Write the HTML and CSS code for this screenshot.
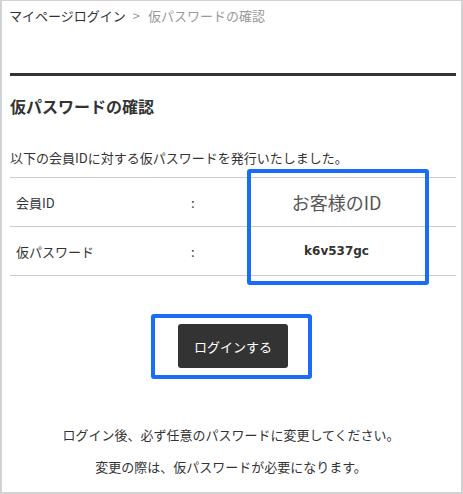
FILE: index.html
```html
<!DOCTYPE html>
<html lang="ja">
<head>
<meta charset="utf-8">
<title>仮パスワードの確認</title>
<link rel="stylesheet" href="styles.css">
</head>
<body>
<div class="page">
  <nav class="crumbs">
    <span class="crumb-link">マイページログイン</span><span class="crumb-sep">&gt;</span><span class="crumb-current">仮パスワードの確認</span>
  </nav>
  <hr class="rule">
  <h1 class="title">仮パスワードの確認</h1>
  <p class="lead">以下の会員IDに対する仮パスワードを発行いたしました。</p>
  <div class="info">
    <div class="row">
      <div class="label">会員ID</div>
      <div class="colon">:</div>
      <div class="value value-id">お客様のID</div>
    </div>
    <div class="row">
      <div class="label">仮パスワード</div>
      <div class="colon">:</div>
      <div class="value value-pw">k6v537gc</div>
    </div>
  </div>
  <div class="actions">
    <button class="btn" type="button">ログインする</button>
  </div>
  <div class="notes">
    <p>ログイン後、必ず任意のパスワードに変更してください。</p>
    <p>変更の際は、仮パスワードが必要になります。</p>
  </div>
  <div class="mark mark-info"></div>
  <div class="mark mark-btn"></div>
</div>
</body>
</html>
```

FILE: styles.css
```css
* { box-sizing: border-box; }
html, body { margin: 0; padding: 0; background: #fff; }
body {
  font-family: "Noto Sans CJK JP", "Noto Sans", sans-serif;
  color: #333;
  font-size: 13px;
}
.page {
  position: relative;
  width: 463px;
  height: 494px;
  border: 2px solid #d2d2d2;
  border-top-width: 1px;
  padding: 5px 5px 0 8px;
  overflow: hidden;
}
.crumbs {
  font-size: 13px;
  line-height: 20px;
  margin-left: -1px;
  white-space: nowrap;
}
.crumb-link { color: #333; }
.crumb-sep { color: #999; margin: 0 8px 0 7px; }
.crumb-current { color: #999; }
.rule {
  margin: 47px 0 0;
  border: 0;
  height: 3px;
  background: #333;
}
.title {
  margin: 18px 0 0;
  font-size: 16px;
  line-height: 24px;
  font-weight: bold;
  color: #333;
}
.lead {
  margin: 30px 0 0;
  font-size: 13px;
  line-height: 20px;
}
.info {
  margin-top: 9px;
  border-top: 1px solid #ccc;
}
.row {
  display: grid;
  grid-template-columns: 180px 27px 1fr;
  align-items: center;
  height: 49px;
  border-bottom: 1px solid #ccc;
}
.label { padding-left: 6px; font-size: 13px; }
.colon { padding-left: 1px; font-size: 13px; }
.value { text-align: center; }
.value-id { font-size: 18px; color: #555; }
.value-pw {
  font-family: "DejaVu Sans", "Noto Sans", sans-serif;
  font-size: 12px;
  font-weight: bold;
  color: #333;
}
.actions {
  display: flex;
  justify-content: center;
  margin-top: 48px;
}
.btn {
  width: 110px;
  height: 44px;
  border: 0;
  border-radius: 3px;
  background: #333;
  color: #fff;
  font-family: "Noto Sans CJK JP", sans-serif;
  font-size: 13px;
  padding: 0;
}
.notes {
  margin-top: 51px;
  text-align: center;
}
.notes p {
  margin: 0;
  font-size: 13px;
  line-height: 32px;
  margin-right: 4px;
}
.mark {
  position: absolute;
  border: 4px solid #1a6cf6;
  border-radius: 3px;
}
.mark-info { left: 245px; top: 168px; width: 182px; height: 116px; }
.mark-btn { left: 149px; top: 313px; width: 161px; height: 65px; }
```
